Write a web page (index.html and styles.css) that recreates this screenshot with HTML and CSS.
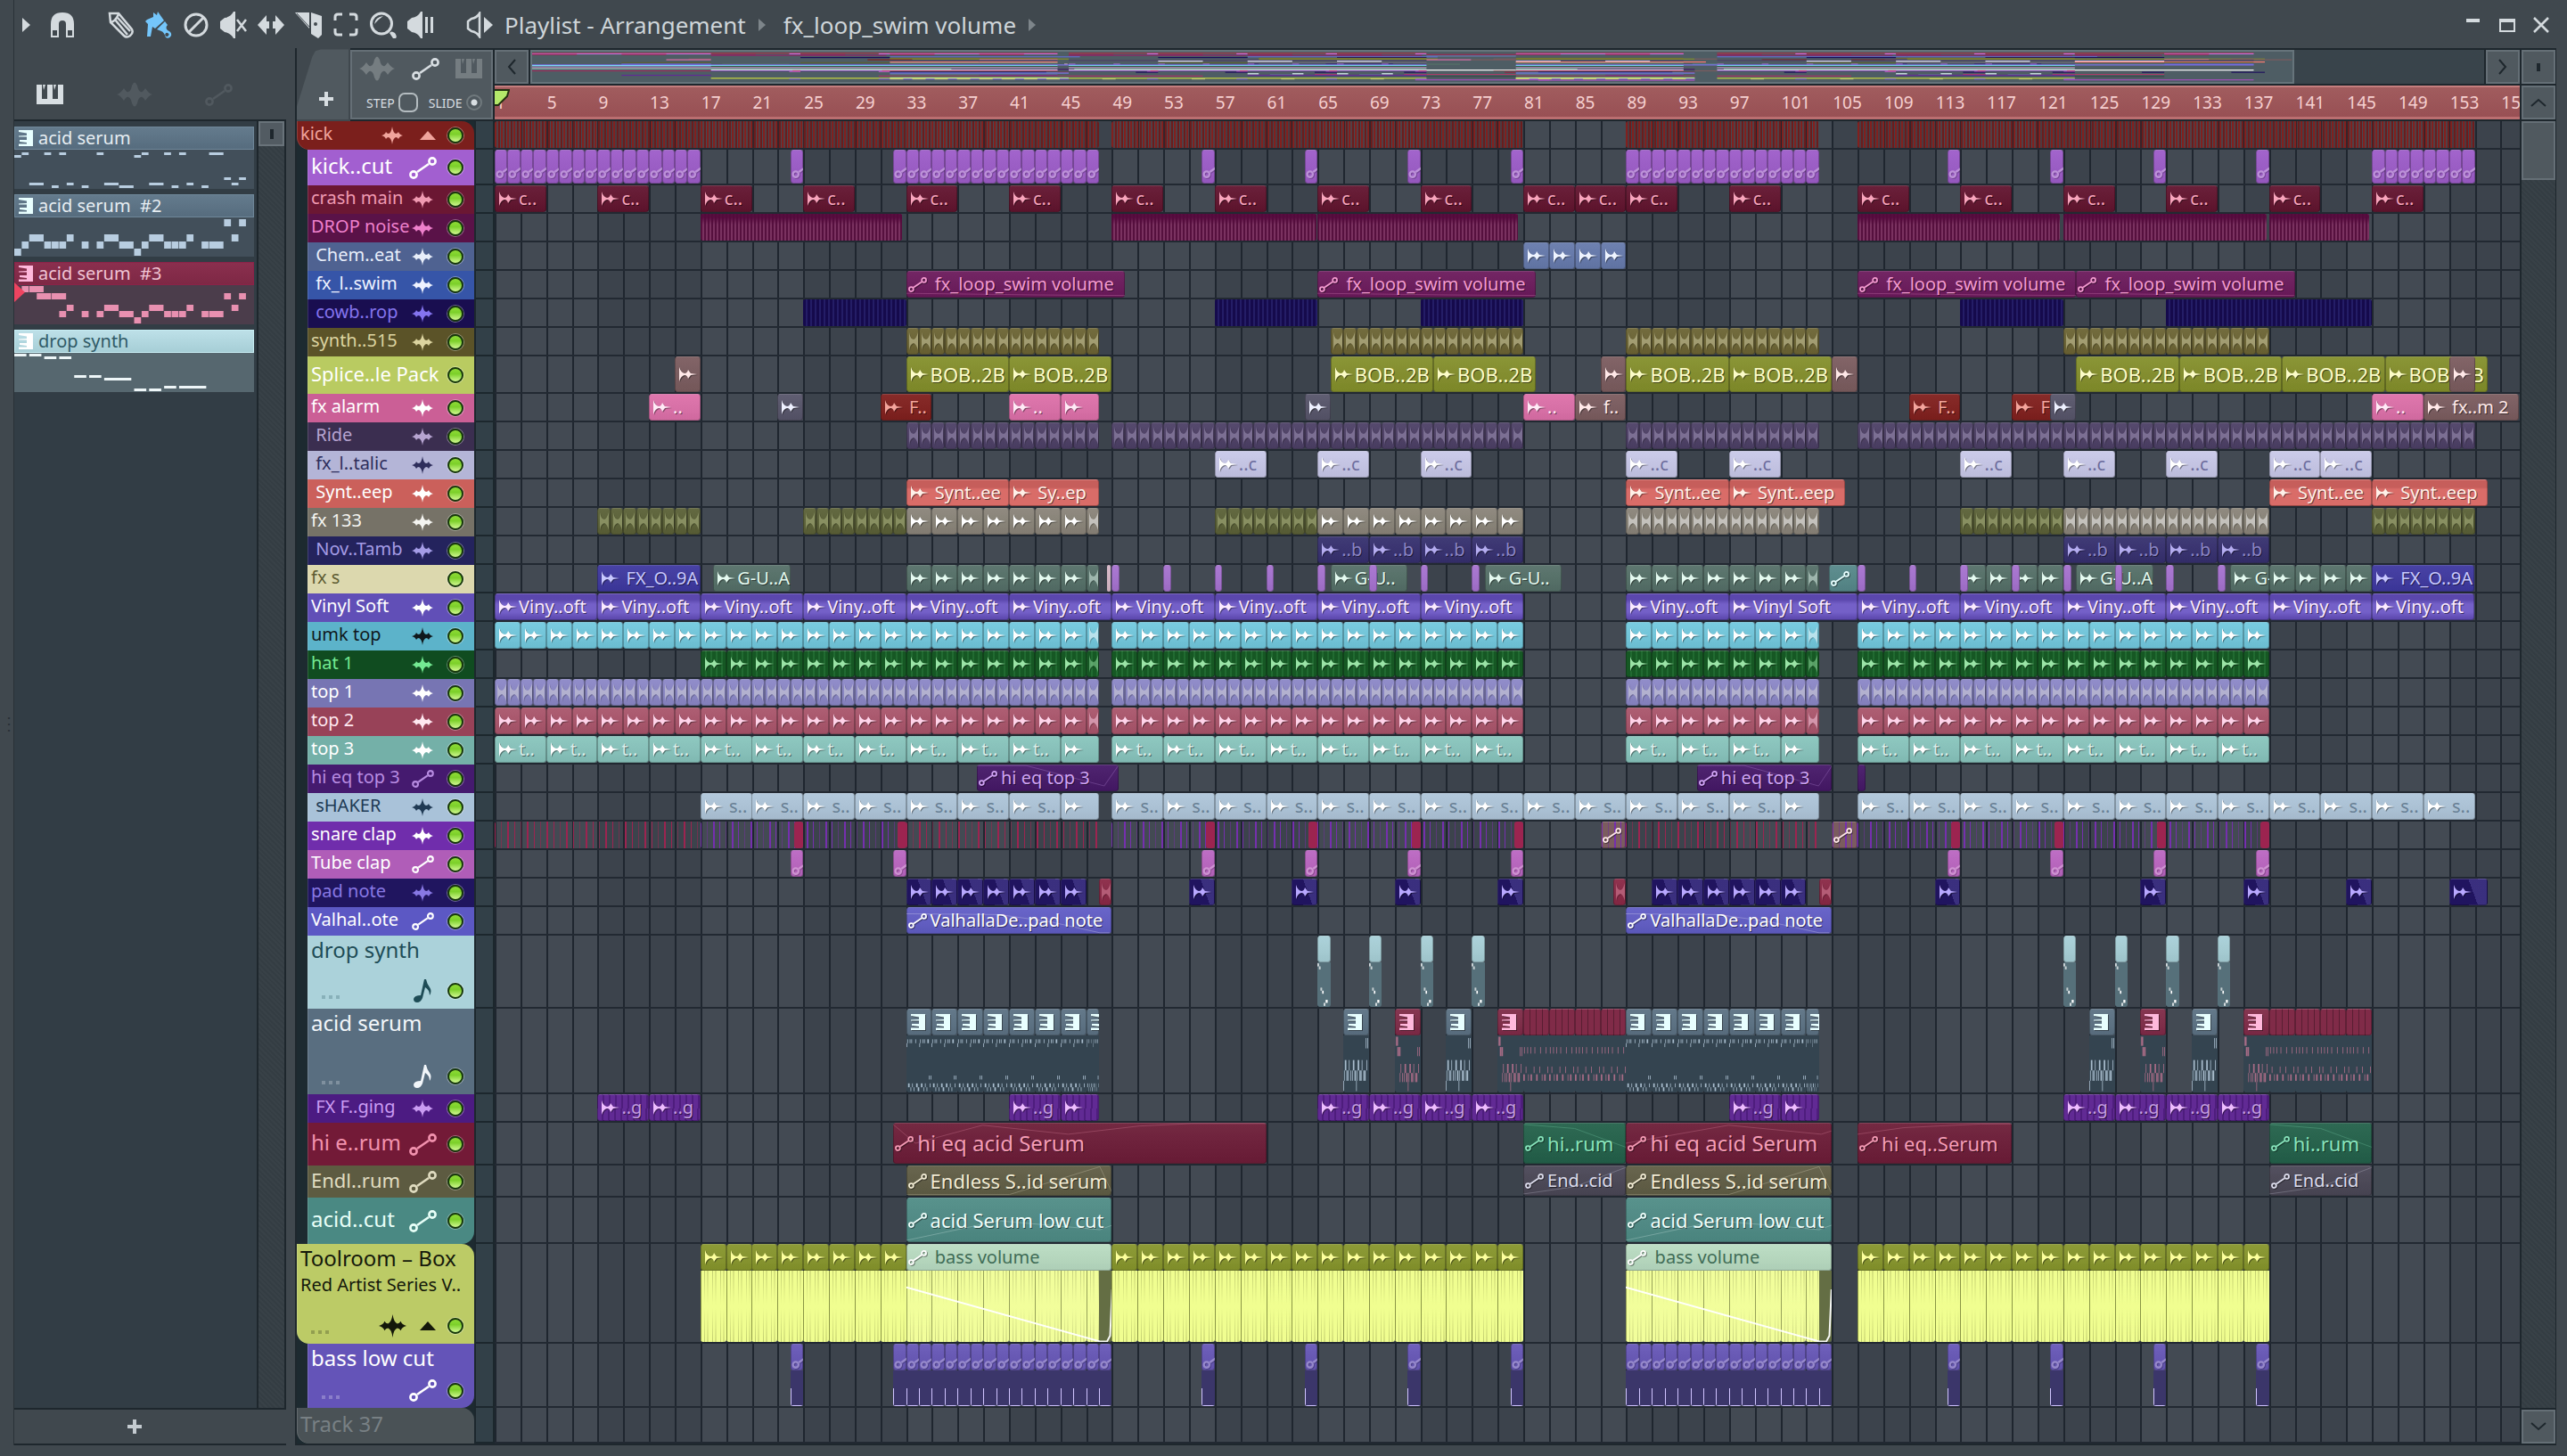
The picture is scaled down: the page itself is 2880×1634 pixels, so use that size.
FILE: index.html
```html
<!DOCTYPE html>
<html lang="en">
<head>
  <meta charset="UTF-8">
  <meta name="viewport" content="width=device-width, initial-scale=1.0">
  <title>Playlist - Arrangement</title>
  <link rel="stylesheet" href="styles.css">
</head>
<body>
  <!-- Shared icons -->
  <svg class="sprite" aria-hidden="true">
    <symbol id="i-link" viewBox="0 0 31 25">
      <g fill="none" stroke="currentColor" stroke-width="2.6">
        <circle cx="5" cy="20" r="3.6"/><circle cx="26" cy="5" r="3.6"/><path d="M9 17L22 8"/>
      </g>
    </symbol>
    <symbol id="i-wave" viewBox="0 0 40 28">
      <path fill="currentColor" d="M0 14Q4 13 8 7Q11 12 13 11Q16 10 17 4Q20 -3 23 4Q24 10 27 11Q29 12 32 7Q36 13 40 14Q36 15 32 21Q29 16 27 17Q24 18 23 24Q20 31 17 24Q16 18 13 17Q11 16 8 21Q4 15 0 14Z"/>
    </symbol>
    <symbol id="i-star" viewBox="0 0 24 20">
      <path fill="currentColor" d="M0 10Q4 9 5 6Q6 8 8 8Q11 7 12 0Q13 7 16 8Q18 8 19 6Q20 9 24 10Q20 11 19 14Q18 12 16 12Q13 13 12 20Q11 13 8 12Q6 12 5 14Q4 11 0 10Z"/>
    </symbol>
    <symbol id="i-hit" viewBox="0 0 20 16">
      <path fill="currentColor" d="M0 0Q2 6 6 7Q9 7 10 3L13 7L20 8L13 9L10 13Q9 9 6 9Q2 10 0 16Z"/>
    </symbol>
    <symbol id="i-hit-short" viewBox="0 0 10 22">
      <path fill="currentColor" d="M0 1Q1 8 5 9Q8 8 10 1V21Q8 14 5 13Q1 14 0 21Z"/>
    </symbol>
    <symbol id="i-piano" viewBox="0 0 30 22">
      <path fill="currentColor" d="M0 0H6V16H12V0H18V16H24V0H30V22H0ZM7 0H10L8 6ZM19 0H22L20 6Z"/>
    </symbol>
    <symbol id="i-keys" viewBox="0 0 16 18">
      <path fill="currentColor" d="M0 0H16V18H0V15.500H9V14L1 13V11H9V7.500H0V6.500L9 6V3.500L0 2Z"/>
    </symbol>
    <symbol id="i-note" viewBox="0 0 20 26">
      <path fill="currentColor" d="M12 0L14 0Q15 5 18 9Q21 13 18 18Q18 12 13 9L10 21Q8 26 4 26Q0 26 0 22Q1 18 8 18Z"/>
    </symbol>
    <symbol id="i-up" viewBox="0 0 18 10"><path fill="currentColor" d="M9 0L18 10H0Z"/></symbol>
    <symbol id="i-plus" viewBox="0 0 16 16"><path fill="currentColor" d="M6 0H10V6H16V10H10V16H6V10H0V6H6Z"/></symbol>
    <symbol id="i-chevron" viewBox="0 0 10 18"><path fill="none" stroke="currentColor" stroke-width="2" d="M9 1L2 9L9 17"/></symbol>
  </svg>

  <header class="titlebar">
    <button class="tool tool-menu" aria-label="Menu"><svg viewBox="0 0 10 18"><path d="M0 0L10 9L0 18Z"/></svg></button>
    <button class="tool tool-magnet" aria-label="Snap"><svg viewBox="0 0 30 30"><path fill-rule="evenodd" d="M2 29V14Q2 1 15 1Q28 1 28 14V29H19V14Q19 10 15 10Q11 10 11 14V29ZM4 21V27H9V21ZM21 21V27H26V21Z"/></svg></button>
    <div class="tools">
      <button class="tool" aria-label="Draw"><svg viewBox="0 0 30 30"><path class="line" d="M2 2L12 2L27 20Q29 24 25 27Q21 30 18 27L3 12ZM2 12Q8 12 12 3M8 9L22 26M11 7L25 22"/></svg></button>
      <button class="tool tool-active" aria-label="Paint"><svg viewBox="0 0 30 30"><path fill-rule="evenodd" d="M2 9L9 6L9 1L13 4L14 0L21 10L11 19L8 17L6 28L2 28L3 14L0 11ZM22 11L25 15Q22 18 25 21Q30 23 29 27Q27 31 23 29Q21 23 18 22L13 20ZM25 24A2 2 0 1 0 26 27A2 2 0 0 0 25 24Z"/></svg></button>
      <button class="tool" aria-label="Delete"><svg viewBox="0 0 30 30"><path class="line thick" d="M7 23L23 7M15 3A12 12 0 1 0 15 27A12 12 0 1 0 15 3Z"/></svg></button>
      <button class="tool" aria-label="Mute"><svg viewBox="0 0 30 30"><path d="M0 11L5 7Q12 6 15 0H17V30H15Q12 24 5 23L0 19Z"/><path class="line" d="M19 9L29 22M29 9L19 22"/></svg></button>
      <button class="tool" aria-label="Slip"><svg viewBox="0 0 30 30"><path d="M0 15L10 4V11H13V19H10V26ZM30 15L20 4V11H17V19H20V26Z"/></svg></button>
      <button class="tool" aria-label="Slice"><svg viewBox="0 0 30 30"><path fill-rule="evenodd" d="M0 1H16V19ZM18 1L30 5V26L26 30L18 25ZM23 12A2 2 0 1 0 25 14A2 2 0 0 0 23 12Z"/><path class="cut" d="M2 2L16 17"/></svg></button>
      <button class="tool" aria-label="Select"><svg viewBox="0 0 30 30"><path class="line thick" d="M3 10V6Q3 3 6 3H11M19 3H24Q27 3 27 6V10M27 19V23Q27 26 24 26H19M11 26H6Q3 26 3 23V19"/></svg></button>
      <button class="tool" aria-label="Zoom"><svg viewBox="0 0 30 30"><path class="line thick" d="M13 2A11 11 0 1 0 13 25A11 11 0 1 0 13 2Z"/><path d="M5 14Q6 6 15 5Q9 9 5 14ZM22 24Q24 21 28 24Q31 28 29 30L26 30Z"/></svg></button>
      <button class="tool" aria-label="Playback"><svg viewBox="0 0 30 30"><path d="M0 11L5 7Q12 6 15 0H17V30H15Q12 24 5 23L0 19ZM20 6H23V24H20ZM26 6H29V24H26Z"/></svg></button>
    </div>
    <button class="tool" aria-label="Audition"><svg viewBox="0 0 30 30"><path class="line" d="M2 11L6 8Q12 7 15 2V28Q12 23 6 22L2 19Z"/><path d="M20 6L30 15L20 24Z"/></svg></button>
    <nav class="crumbs">
      <a href="#playlist">Playlist - Arrangement</a><i class="crumb-arrow"></i>
      <a href="#clip">fx_loop_swim volume</a><i class="crumb-arrow"></i>
    </nav>
    <div class="window-buttons">
      <button class="tool tool-win" aria-label="Minimise"><svg viewBox="0 0 18 18"><path d="M1 2H16V6H1Z"/></svg></button>
      <button class="tool tool-win" aria-label="Maximise"><svg viewBox="0 0 18 18"><path fill-rule="evenodd" d="M0 2H18V17H0ZM2 6V15H16V6Z"/></svg></button>
      <button class="tool tool-win" aria-label="Close"><svg viewBox="0 0 18 18"><path class="line" d="M1 1L17 17M17 1L1 17"/></svg></button>
    </div>
  </header>

  <div class="workspace">
    <div class="edge"><span class="grip">⋮</span></div>

    <aside class="picker">
      <div class="picker-tabs">
        <button class="tab on" aria-label="Patterns"><svg class="ic-piano"><use href="#i-piano"/></svg></button>
        <button class="tab" aria-label="Audio"><svg class="ic-wave"><use href="#i-wave"/></svg></button>
        <button class="tab" aria-label="Automation"><svg class="ic-link"><use href="#i-link"/></svg></button>
      </div>
      <div class="picker-body">
        <div class="picker-list" id="pickerList"></div>
        <div class="picker-scroll"><span class="picker-thumb"></span></div>
      </div>
      <button class="picker-add" aria-label="Add pattern"><svg class="ic-plus"><use href="#i-plus"/></svg></button>
    </aside>

    <main class="playlist" id="playlist">
      <div class="playlist-top">
        <button class="add-track" aria-label="Add track"><svg class="ic-plus"><use href="#i-plus"/></svg></button>
        <div class="modes">
          <div class="mode-icons">
            <svg class="ic-wave dim"><use href="#i-wave"/></svg>
            <svg class="ic-link"><use href="#i-link"/></svg>
            <svg class="ic-piano dim"><use href="#i-piano"/></svg>
          </div>
          <div class="mode-checks">
            <label for="step">STEP</label><input type="checkbox" id="step" class="step-box">
            <label for="slide">SLIDE</label><input type="radio" id="slide" class="slide-dot" checked>
          </div>
        </div>
        <div class="time-head">
          <div class="map-row">
            <button class="scroll-btn" aria-label="Scroll left"><svg class="ic-chev"><use href="#i-chevron"/></svg></button>
            <div class="map"><div class="map-view" id="minimap"></div></div>
            <button class="scroll-btn" aria-label="Scroll right"><svg class="ic-chev flip"><use href="#i-chevron"/></svg></button>
          </div>
          <div class="ruler" id="ruler"></div>
        </div>
      </div>
      <div class="tracks" id="tracks"></div>
    </main>

    <aside class="vscroll">
      <button class="scroll-btn" aria-label="Zoom"><i class="zoom-mark"></i></button>
      <button class="scroll-btn" aria-label="Scroll up"><svg class="ic-chev up"><use href="#i-chevron"/></svg></button>
      <div class="vtrack"><span class="vthumb"></span></div>
      <button class="scroll-btn" aria-label="Scroll down"><svg class="ic-chev down"><use href="#i-chevron"/></svg></button>
    </aside>
  </div>

  <script src="script.js"></script>
</body>
</html>
```
FILE: styles.css
```css
* {
  box-sizing: border-box;
}

body {
  margin: 0;
  height: 100vh;
  display: flex;
  flex-direction: column;
  overflow: hidden;
  background: #40484e;
  color: #d4dade;
  font-family: "Noto Sans", "Open Sans", sans-serif;
  font-size: 20px;
}

button {
  padding: 0;
  border: none;
  background: none;
  color: inherit;
  font: inherit;
  cursor: pointer;
}

svg {
  display: block;
}

.sprite {
  position: absolute;
  width: 0;
  height: 0;
}

.ic-piano { width: 30px; height: 22px; }
.ic-wave { width: 40px; height: 28px; }
.ic-link { width: 31px; height: 25px; }
.ic-plus { width: 16px; height: 16px; }
.ic-chev { width: 10px; height: 18px; }
.ic-chev.flip { transform: rotate(180deg); }
.ic-chev.up { transform: rotate(90deg); }
.ic-chev.down { transform: rotate(-90deg); }
.dim { color: #757d81; }

/* ---- Title bar ---- */

.titlebar {
  display: flex;
  align-items: center;
  height: 54px;
  padding: 2px 20px 0 25px;
}

.tool {
  width: 30px;
  height: 30px;
  color: #d4dade;
}

.tool svg {
  width: 100%;
  height: 100%;
  fill: currentColor;
}

.tool .line {
  fill: none;
  stroke: currentColor;
  stroke-width: 2.5;
}

.tool .thick {
  stroke-width: 3;
}

.tool .cut {
  stroke: #40484e;
  stroke-width: 1;
}

.tool-menu {
  width: 9px;
  height: 18px;
  margin-right: 21px;
}

.tool-magnet {
  margin-right: 36px;
}

.tool-active {
  color: #74c6fb;
}

.tools {
  display: flex;
  gap: 12px;
  margin-right: 36px;
}

.crumbs {
  display: flex;
  align-items: center;
  margin-left: 13px;
  font-size: 26px;
  line-height: 32px;
}

.crumbs a {
  color: #ced5d9;
  text-decoration: none;
}

.crumb-arrow {
  margin: 0 20px 0 14px;
  border-left: 8px solid #7d858a;
  border-top: 7px solid transparent;
  border-bottom: 7px solid transparent;
}

.window-buttons {
  display: flex;
  gap: 20px;
  margin-left: auto;
}

.tool-win {
  width: 18px;
  height: 18px;
}

/* ---- Workspace ---- */

.workspace {
  flex: 1;
  min-height: 0;
  display: flex;
  padding-right: 12px;
  margin-bottom: 12px;
}

.edge {
  flex: none;
  width: 16px;
  display: flex;
  align-items: center;
  border-right: 1px solid #2a3238;
  margin-top: -54px;
}

.grip {
  color: #2a3238;
}

/* ---- Picker ---- */

.picker {
  flex: none;
  width: 305px;
  display: flex;
  flex-direction: column;
}

.picker-tabs {
  height: 80px;
  display: flex;
  align-items: center;
  justify-content: space-between;
  padding: 24px 60px 0 25px;
}

.tab {
  color: #51595f;
}

.tab.on {
  color: #d8dee2;
}

.picker-body {
  flex: 1;
  min-height: 0;
  display: flex;
  border: 2px solid #1e272d;
  border-left: none;
}

.picker-list {
  flex: 1;
  display: flex;
  flex-direction: column;
  gap: 6px;
  padding: 6px 3px 0 0;
  background: #323d45;
}

.picker-scroll {
  width: 31px;
  border-left: 2px solid #1e272d;
  background: repeating-linear-gradient(45deg, #343d43 0 2px, #384147 2px 4px);
}

.picker-thumb {
  display: flex;
  align-items: center;
  justify-content: center;
  height: 28px;
  border: 2px solid #69737a;
  background: #525b62;
}

.picker-thumb::after {
  content: "";
  width: 4px;
  height: 11px;
  background: #1e272d;
}

.picker-add {
  height: 40px;
  display: flex;
  align-items: center;
  justify-content: center;
  padding-right: 35px;
  color: #c4cbd0;
  border-bottom: 2px solid #1e272d;
}

.pattern {
  position: relative;
  height: 70px;
  background: #424f5a;
  color: #b8cde0;
}

.pattern-name {
  display: flex;
  align-items: center;
  gap: 6px;
  height: 26px;
  padding: 0 4px;
  background: linear-gradient(#647b8d, #566c7e);
  border: 1px solid #6f8799;
  color: #e6edf2;
  line-height: 26px;
  white-space: pre;
}

.pattern-name svg {
  width: 16px;
  height: 18px;
  color: #e8ffff;
}

.pattern .notes {
  height: 44px;
}

.pattern.red { background: #4b3d4b; color: #e890b0; }
.pattern.red .pattern-name { background: linear-gradient(#8a2f4e, #7e2845); border-color: #8c2248; color: #f0c4d4; }
.pattern.red .pattern-name svg { color: #ffb8dc; }
.pattern.ice { background: #56676f; color: #eef6f8; }
.pattern.ice .pattern-name { background: linear-gradient(#bde0e8, #a6ced6); border-color: #c8eef4; color: #305a66; }
.pattern.ice .pattern-name svg { color: #ffffff; }

.selected-mark {
  position: absolute;
  left: 0;
  top: 23px;
  border-left: 12px solid #ee4460;
  border-top: 11px solid transparent;
  border-bottom: 11px solid transparent;
}

.notes {
  width: 100%;
  fill: currentColor;
}

/* ---- Playlist head ---- */

.playlist {
  flex: 1;
  min-width: 0;
  display: flex;
  flex-direction: column;
  margin-left: 10px;
  border-left: 2px solid #1e272d;
  border-bottom: 2px solid #1e272d;
}

.playlist-top {
  flex: none;
  height: 82px;
  display: flex;
  gap: 2px;
  padding-bottom: 2px;
  background: linear-gradient(to right, #40484e 60px, #1e272d 60px);
}

.add-track {
  width: 58px;
  display: flex;
  align-items: flex-end;
  justify-content: center;
  padding: 0 0 15px 8px;
  color: #d8dee2;
  background: #50595f;
  clip-path: polygon(0 100%, 0 82%, 30% 12%, 36% 4%, 46% 2%, 100% 2%, 100% 100%);
}

.modes {
  width: 160px;
  margin-top: 2px;
  padding: 3px 10px 0 8px;
  background: #50595f;
  border: 2px solid #656f76;
  color: #d8dee2;
}

.mode-icons,
.mode-checks {
  display: flex;
  align-items: center;
  justify-content: space-between;
  height: 32px;
}

.mode-checks {
  justify-content: flex-start;
  margin: 6px 0 0 8px;
  font-size: 14px;
}

.step-box,
.slide-dot {
  appearance: none;
  flex: none;
  margin: 0 12px 0 4px;
  width: 22px;
  height: 22px;
  border: 2px solid #b4bcc0;
  border-radius: 7px;
}

.slide-dot {
  margin-right: 0;
  width: 18px;
  height: 18px;
  border: 2px solid #70797d;
  border-radius: 50%;
  background: radial-gradient(#d8dee2 0 3px, transparent 4px);
}

.time-head {
  flex: 1;
  min-width: 0;
}

.map-row {
  display: flex;
  gap: 2px;
  height: 42px;
  padding: 2px 0;
}

.scroll-btn {
  flex: none;
  display: flex;
  align-items: center;
  justify-content: center;
  width: 38px;
  height: 38px;
  background: #50595f;
  border: 2px solid #656f76;
  color: #1e272d;
}

.map {
  flex: 1;
  background: #39444b;
}

.map-view {
  width: 90.3%;
  height: 100%;
  background: #4e5d64;
  border: 2px solid #66747b;
}

.map-view svg {
  width: 100%;
  height: 100%;
}

.map-view rect {
  fill: var(--map, var(--clip));
}

.ruler {
  position: relative;
  height: 38px;
  overflow: hidden;
  background: linear-gradient(#a15c5e, #985054);
  border-top: 2px solid #c47e7e;
  border-bottom: 3px solid #ba6e70;
  color: #f6d0d0;
  font-size: 19px;
  line-height: 32px;
}

.bar-no {
  position: absolute;
  top: 1px;
  padding-left: 1px;
}

.playhead {
  position: absolute;
  left: 0;
  top: 2px;
  width: 17px;
  height: 20px;
  fill: #b4e86a;
  stroke: #223010;
  stroke-width: 2;
}

/* ---- Tracks ---- */

.tracks {
  flex: 1;
  min-height: 0;
  display: flex;
  flex-direction: column;
  background: #1d2a30;
}

.track {
  flex: none;
  display: grid;
  grid-template-columns: 199px 23px minmax(0, 1fr);
}

.track:last-child {
  flex: 1;
}

.track-head {
  position: relative;
  display: flex;
  align-items: center;
  margin-left: 12px;
  padding: 0 12px 4px 4px;
  background: var(--head);
  color: var(--ink);
  box-shadow: inset 1px 0 0 rgba(255, 255, 255, .15);
}

.group .track-head {
  margin-left: 0;
  border-radius: 0 14px 0 14px;
}

.group-end .track-head {
  border-radius: 0 0 14px 0;
}

.track-name {
  flex: 1;
  min-width: 0;
  white-space: pre;
  line-height: 26px;
}

.track-name.mid { font-size: 22px; line-height: 32px; }
.track-name.big { font-size: 24px; line-height: 32px; }
.track-name small { display: block; font-size: 20px; line-height: 28px; }

.slot {
  flex: none;
  display: flex;
  align-items: center;
  justify-content: center;
  width: 32px;
  margin-right: 12px;
  padding-top: 4px;
}

.slot + .slot {
  margin-left: -4px;
  margin-right: 6px;
}

.slot .s-star { width: 24px; height: 20px; }
.slot .s-link { width: 25px; height: 20px; }
.slot .s-up { width: 18px; height: 10px; }
.slot .s-note { width: 20px; height: 26px; }
.tallish .slot .s-link { width: 31px; height: 25px; }
.tall .slot .s-star { width: 31px; height: 26px; }

.led {
  flex: none;
  width: 18px;
  height: 18px;
  margin-top: 4px;
  border: 2px solid #17380c;
  border-radius: 50%;
  background: linear-gradient(#8edb36, #7cd02a 40%, #d0f890);
  box-shadow: 0 0 0 1px rgba(255, 255, 255, .35);
}

.tall .track-head {
  flex-wrap: wrap;
  align-content: space-between;
  justify-content: flex-end;
  padding-bottom: 7px;
}

.tall .track-name {
  flex: 1 0 100%;
}

.dots {
  margin: 18px auto 0 12px;
  width: 20px;
  height: 4px;
  opacity: .25;
  background: repeating-linear-gradient(to right, currentColor 0 4px, transparent 4px 8px);
}

.gutter {
  border: 2px solid #1c272d;
  border-width: 0 2px 2px 2px;
  background: #324048;
}

.lane {
  position: relative;
  overflow: hidden;
  background:
    linear-gradient(to top, #222932 0 2px, transparent 2px),
    repeating-linear-gradient(to right, #1f262f 0 2px, transparent 2px calc(100% * 2 / 157.5)),
    repeating-linear-gradient(to right, #434a53 0 calc(100% * 8 / 157.5), #3c434c 0 calc(100% * 16 / 157.5));
}

/* ---- Clips ---- */

.clip {
  position: absolute;
  top: 0;
  bottom: 2px;
  display: flex;
  flex-direction: column;
  overflow: hidden;
  border-radius: 3px;
  color: var(--mark);
}

.clip-bar {
  flex: 1;
  min-height: 0;
  display: flex;
  align-items: center;
  padding-left: 4px;
  background: var(--fill, linear-gradient(rgba(255, 255, 255, .05), rgba(0, 0, 0, .06))) var(--clip);
  border: 1px solid rgba(0, 0, 0, .25);
  border-top-color: rgba(255, 255, 255, .18);
  border-radius: 3px;
}

.clip-bar svg {
  flex: none;
  width: 20px;
  height: 16px;
  filter: drop-shadow(1px 1px 0 rgba(0, 0, 0, .4));
}

.clip.auto .clip-bar {
  padding-left: 1px;
}

.clip.auto .clip-bar svg {
  width: 21px;
  height: 17px;
  margin-right: 2px;
}

.clip.faint .clip-bar {
  padding-left: 2px;
}

.clip.faint .clip-bar svg {
  width: 10px;
  height: 22px;
  opacity: .5;
}

.clip.knob .clip-bar {
  padding-left: 0;
}

.clip.knob .clip-bar svg {
  width: 28px;
  height: 22px;
  opacity: .5;
  margin-top: 4px;
}

.clip.keys .clip-bar svg {
  width: 16px;
  height: 18px;
  color: var(--key, #e8ffff);
}

.clip.bare .clip-bar {
  border: none;
  border-radius: 0;
}

.clip-label {
  padding-left: 2px;
  white-space: pre;
  line-height: 26px;
  text-shadow: 1px 1px 0 rgba(0, 0, 0, .5);
}

.clip-label.mid { font-size: 22px; }
.clip-label.big { font-size: 24px; }

.clip.split .clip-bar {
  flex: none;
  height: 30px;
}

.clip-body {
  flex: 1;
  min-height: 0;
  background: var(--body);
  color: var(--note);
}

.clip-body svg {
  width: 100%;
  height: 100%;
}

.curve {
  position: absolute;
  inset: 0;
  width: 100%;
  height: 100%;
  fill: none;
  stroke: currentColor;
  opacity: .25;
}

.overlay-bass .curve {
  top: 31px;
  height: 80px;
  stroke: #ffffff;
  stroke-width: 2;
  opacity: .95;
}

/* ---- Track colours ---- */

.kick { --head: #7b1f1c; --ink: #f0a49c; --clip: transparent; --map: #a03848; --mark: #f0a49c;
  --fill: repeating-linear-gradient(to right, #82201e 0 2px, rgba(125, 30, 28, .25) 2px 4px, #6c1c1c 4px 6px, transparent 6px 7px); }
.kickcut { --head: #a25fd0; --ink: #ffffff; --clip: #9d5cc9; --mark: #e2c8f0; --map: #c074e0; }
.crash { --head: #6b1733; --ink: #f09ab2; --clip: #62142f; --mark: #f8a4bc; --map: #982850; }
.drop { --head: #5a1248; --ink: #ee80cc; --clip: #54093c; --mark: #ee80cc; --map: #8c2468;
  --fill: linear-gradient(rgba(84, 9, 60, .9) 4px, transparent 12px), repeating-linear-gradient(to right, #56103e 0 2px, #7a3260 2px 4px); }
.chem { --head: #4f6291; --ink: #e8eefa; --clip: #667aac; --mark: #eef4ff; }
.swim { --head: #3655a8; --ink: #eef2ff; --clip: #6c1a5c; --mark: #f49ad0; --map: #6070c8; }
.cowb { --head: #190e50; --ink: #8474ee; --clip: #190e58; --mark: #8474ee;
  --fill: repeating-linear-gradient(to right, #150a4c 0 3px, #241d66 3px 5px); }
.synth { --head: #5b5328; --ink: #dcd4a0; --clip: #6c6434; --mark: #d8d4ac; }
.splice { --head: #b9cb61; --ink: #ffffff; --clip: #848f2b; --mark: #fcfcc8; }
.brown { --clip: #7b5c5f; --mark: #ffe8e8; }
.alarm { --head: #cb5f96; --ink: #ffffff; --clip: #dd70a9; --mark: #ffeaf6; }
.slate { --clip: #57556a; --mark: #eef0ff; }
.red-fx { --clip: #81201e; --mark: #f4a49c; }
.ride { --head: #3b2e50; --ink: #b6a4d0; --clip: #4d4066; --mark: #a89cc0; }
.talic { --head: #b4b5d7; --ink: #2e2e5c; --clip: #c8c8e9; --mark: #ffffff; --text: #6c6c9c; --map: #e8e8ff; }
.sweep { --head: #cb605b; --ink: #ffffff; --clip: #d96c68; --mark: #fff0e8; --map: #ff7c70;
  --fill: linear-gradient(rgba(120, 40, 40, .2) 8px, transparent 10px); }
.fx133 { --head: #767267; --ink: #f4f4f0; --clip: #8a8479; --mark: #ffffff; }
.olive { --clip: #5b6137; --mark: #b4bc88; }
.nov { --head: #24235d; --ink: #a49ce6; --clip: #36306f; --mark: #b4acf0; --text: #8a84c4; }
.fxs { --head: #dcd8ae; --ink: #5e5c32; --clip: #557068; --mark: #e4faf0; }
.indigo { --clip: #3e38a0; --mark: #c8c8ff; --map: #6868e8; }
.violet { --clip: #a672d0; --mark: #e0c0ff; }
.blush { --clip: #d8b8c8; }
.teal { --clip: #56888a; --mark: #e8ffff; }
.vinyl { --head: #614fb7; --ink: #ffffff; --clip: #7460c8; --mark: #fbeaff; --map: #7c70e8;
  --fill: linear-gradient(rgba(60, 40, 140, .45) 6px, transparent 11px 20px, rgba(60, 40, 140, .4) 27px); }
.umk { --head: #5cb3ca; --ink: #10181c; --clip: #72c9de; --mark: #ffffff; --map: #80e4ff; }
.hat { --head: #104c20; --ink: #74ea92; --clip: #165824; --mark: #9ae4a6;
  --fill: repeating-linear-gradient(to right, transparent 0 4px, rgba(60, 150, 80, .3) 4px 6px); }
.top1 { --head: #7775b3; --ink: #ffffff; --clip: #8b87c7; --mark: #dcdcdc; }
.top2 { --head: #984258; --ink: #ffe8f0; --clip: #aa556b; --mark: #ffd4ea; }
.top3 { --head: #74b0a8; --ink: #ffffff; --clip: #88c5bd; --mark: #ffffff; --text: #d8ece8; }
.hieq { --head: #451a6f; --ink: #b88ce2; --clip: #461868; --mark: #d0a4f4; }
.shaker { --head: #a9c2d9; --ink: #203a54; --clip: #afc6da; --mark: #ffffff; --text: #687f94; --map: #ffffff; }
.snare { --head: #702dac; --ink: #ffffff; --clip: transparent; --map: #7044a0;
  --fill: repeating-linear-gradient(to right, #752fae 0 1px, transparent 1px 7px, rgba(110, 50, 150, .6) 7px 8px, transparent 8px 14px, #752fae 14px 16px, transparent 16px 21px); }
.snare-red { --clip: transparent; --map: #98305c;
  --fill: repeating-linear-gradient(to right, #9c2450 0 1px, transparent 1px 7px, rgba(150, 40, 80, .6) 7px 8px, transparent 8px 14px, #9c2450 14px 16px, transparent 16px 22px); }
.snare-block { --clip: #9c2450; --fill: none; }
.tube { --head: #b05db8; --ink: #ffffff; --clip: #bb66c2; --mark: #eac0ea; }
.pad { --head: #20155f; --ink: #8878e4; --clip: #20145f; --mark: #b8a8ff;
  --fill: linear-gradient(70deg, transparent 60%, rgba(120, 110, 200, .3) 60%); }
.rose { --clip: #8a2846; --mark: #e08ca4; }
.valhalla { --head: #5c58c4; --ink: #ffffff; --clip: #615dc6; --mark: #ffffff; --map: #7480f0; }
.dropsynth { --head: #abd2da; --ink: #1e4c56; --clip: #a8d0d8; --mark: #ffffff; --body: #56707a; --note: #ffffff; --map: #e8ffff; }
.acid { --head: #596e80; --ink: #f2f6fa; --clip: #5c7284; --mark: #ffffff; --body: #344450; --note: #a8bccc; }
.acid-red { --clip: #802b48; --key: #ffb8dc; --body: #344450; --note: #a86c86; --map: #b03c68; }
.fxg { --head: #4c1b82; --ink: #ca9cf2; --clip: #612a94; --mark: #eebcff; --text: #c49ce0;
  --fill: repeating-linear-gradient(92deg, transparent 0 5px, rgba(50, 10, 90, .4) 5px 7px); }
.hie { --head: #731a37; --ink: #f292ae; --clip: #6d1d38; --mark: #f69cb6; --map: #a83860; }
.forest { --clip: #23614a; --mark: #88e4bc; }
.endless { --head: #5d5b41; --ink: #e0dcc0; --clip: #605d45; --mark: #f2ecd4; }
.mauve { --clip: #4a4756; --mark: #dcdcec; }
.acidcut { --head: #4a8983; --ink: #e8fff8; --clip: #4f8c86; --mark: #f0fffc; }
.tool-box { --head: #bccb66; --ink: #14180a; --clip: #87962c; --mark: #fcff9c; --map: #c8d840;
  --body: linear-gradient(to right, rgba(70, 80, 20, .6) 0 1px, transparent 1px), linear-gradient(transparent, #f0fe90 48% 52%, transparent), repeating-linear-gradient(to right, #f0fe90 0 4px, #c0cc70 4px 5px, #f0fe90 5px 7px, #d4e07c 7px 9px); }
.overlay-bass { --clip: #b9dcc2; --mark: #ffffff; --text: #3f6c56;
  --body: linear-gradient(to right, rgba(255, 255, 255, .1) 93.8%, #646e44 93.8%); --map: #f0ff90; }
.basscut { --head: #6454b8; --ink: #ffffff; --clip: #6757b7; --mark: #c8bce8; --map: #7c68c8;
  --body: linear-gradient(#d0c4ff, #d0c4ff) 0 100% / 100% 1px no-repeat, linear-gradient(#d0c4ff, #d0c4ff) 0 100% / 1px 20px no-repeat, #3b366a; }
.empty { --head: #4a5256; --ink: #788084; }
.map-olive { --clip: #b8c070; }
.map-purple { --clip: #a050b8; }

.talic .clip-label, .nov .clip-label, .top3 .clip-label, .shaker .clip-label, .fxg .clip-label, .overlay-bass .clip-label {
  color: var(--text);
}

.talic .clip-label, .shaker .clip-label, .overlay-bass .clip-label {
  text-shadow: none;
}

/* Clips recoloured inside a track drop that track's waveform */
.rose {
  --fill: linear-gradient(rgba(255, 255, 255, .05), rgba(0, 0, 0, .06));
}

.acid-red.cont {
  --fill: repeating-linear-gradient(to right, transparent 0 6px, rgba(0, 0, 0, .3) 6px 7px);
}

/* ---- Vertical scroll ---- */

.vscroll {
  flex: none;
  width: 41px;
  display: flex;
  flex-direction: column;
  gap: 2px;
  padding: 2px 1px 2px 2px;
  background: #1e272d;
}

.vtrack {
  flex: 1;
  background: repeating-linear-gradient(45deg, #343d43 0 2px, #384147 2px 4px);
}

.vthumb {
  display: block;
  height: 66px;
  background: #50595f;
  border: 2px solid #656f76;
}

.zoom-mark {
  width: 4px;
  height: 9px;
  background: #1e272d;
}
```
FILE: script.js
```js
// Visible length of the timeline, in bars
const BARS = 157.5;

// Patterns: notes are [step, length, top], 32 steps wide and 44 high
const patterns = {
  one: { h: 3, notes: [[0,1,6],[1,1,3],[4,1,3],[6,1,3],[11,1,3],[16,1,6],[17,1,3],[20,1,3],[22,1,3],[26,2,3],[2,2,37],[5,1,40],[7,1,37],[9,1,40],[12,2,37],[14,2,40],[18,2,37],[21,1,40],[23,1,37],[25,1,40],[28,1,31],[29,1,37],[30,1,31]] },
  two: { h: 8, notes: [[0,1,35],[1,1,27],[2,2,19],[4,1,27],[5,1,27],[6,1,27],[7,1,19],[9,1,27],[11,1,27],[12,2,19],[14,2,27],[16,1,35],[17,1,27],[18,2,19],[20,1,27],[21,1,27],[22,1,27],[23,1,19],[25,1,27],[26,2,27],[28,1,2],[29,1,19],[30,1,2]] },
  three: { h: 7, notes: [[1,1,1],[2,2,1],[3,2,9],[5,2,9],[6,1,29],[7,1,22],[9,1,29],[11,1,29],[12,2,22],[14,2,29],[16,1,36],[17,1,29],[18,2,22],[20,1,29],[21,1,29],[22,1,29],[23,1,22],[25,1,29],[26,2,29],[28,1,9],[29,1,22],[30,1,9]] },
  loop: { h: 5, notes: [[1,1,9],[5,1,9],[9,1,9],[14,1,9],[21,1,9],[28,1,9],[0,2,30],[3,1,24],[6,1,30],[9,2,30],[13,1,24],[16,2,30],[20,1,24],[23,1,30],[26,2,30],[30,1,24]] },
  drop: { h: 3, notes: [[0,1.7,1],[2,1.7,1],[4,1.7,4],[6,1.7,4],[8,1.7,25],[10,1.7,25],[12,3.7,28],[16,1.7,40],[18,1.7,40],[20,1.7,37],[22,3.7,37]] }
};

const pickerItems = [
  { name: "acid serum", pattern: "one" },
  { name: "acid serum  #2", pattern: "two" },
  { name: "acid serum  #3", pattern: "three", cls: "red", selected: true },
  { name: "drop synth", pattern: "drop", cls: "ice" }
];

// A run is [kind, start, end, clip length, label, options]
const wave = (s, e, len, label, o) => ["wave", s, e, len, label, o];
const auto = (s, e, label, o) => ["auto", s, e, e - s, label, o];
const bare = (s, e, o) => ["bare", s, e, e - s, "", o];
const each = (starts, fn) => starts.map(fn);

const main = [[0, 47], [48, 80], [88, 103], [106, 138]];
const fills = [23, 31, 55, 63, 71, 79, 113, 121, 129, 137];

const tracks = [
  { name: "kick", cls: "kick", h: 32, icon: "star", group: true,
    runs: [bare(0, 47), bare(48, 80), bare(88, 103), bare(106, 154)] },
  { name: "kick..cut", cls: "kickcut", h: 40, icon: "link", size: "big",
    runs: [[0, 16], [23, 24], [31, 47], [55, 56], [63, 64], [71, 72], [79, 80], [88, 103], [113, 114], [121, 122], [129, 130], [137, 138], [146, 154]].map(([s, e]) => ["knob", s, e, 1]) },
  { name: "crash main", cls: "crash", h: 32, icon: "star",
    runs: each([0, 8, 16, 24, 32, 40, 48, 56, 64, 72, 80, 84, 88, 96, 106, 114, 122, 130, 138, 146], s => wave(s, s + 4, 4, "c..")) },
  { name: "DROP noise", cls: "drop", h: 32, icon: "star",
    runs: [bare(16, 31.7), bare(48, 63.9), bare(64, 79.6), bare(106, 121.7), bare(122, 137.8), bare(138, 145.8)] },
  { name: " Chem..eat", cls: "chem", h: 32, icon: "star", runs: [wave(80, 88, 2)] },
  { name: " fx_l..swim", cls: "swim", h: 32, icon: "star",
    runs: each([32, 64, 106, 123], s => auto(s, s + 17, " fx_loop_swim volume", { curve: "0,84 60,90 100,92" })) },
  { name: " cowb..rop", cls: "cowb", h: 32, icon: "star",
    runs: [bare(24, 32), bare(56, 64), bare(72, 80), bare(114, 122), bare(130, 146)] },
  { name: "synth..515", cls: "synth", h: 32, icon: "star",
    runs: [wave(32, 47, 1), wave(65, 80, 1), wave(88, 103, 1), wave(122, 138, 1)] },
  { name: "Splice..le Pack", cls: "splice", h: 42, size: "mid", noIcon: true,
    runs: [...each([32, 40, 65, 73, 88, 96, 123, 131, 139, 147], s => wave(s, s + 8, 8, "BOB..2B", { size: "mid" })),
      ...each([14, 86, 104, 152], s => wave(s, s + 2, 2, "", { cls: "brown" }))] },
  { name: "fx alarm", cls: "alarm", h: 32, icon: "star",
    runs: [wave(12, 16, 4, ".."), wave(40, 47, 4, ".."), wave(80, 84, 4, ".."), wave(146, 150, 4, ".."),
      wave(30, 34, 4, " F..", { cls: "red-fx" }), wave(110, 114, 4, " F..", { cls: "red-fx" }), wave(118, 122, 4, " F", { cls: "red-fx" }),
      wave(22, 24, 2, "", { cls: "slate" }), wave(63, 65, 2, "", { cls: "slate" }), wave(121, 123, 2, "", { cls: "slate" }),
      wave(84, 88, 4, " f..", { cls: "brown" }), wave(150, 157.4, 7.4, " fx..m 2", { cls: "brown" })] },
  { name: " Ride", cls: "ride", h: 32, icon: "star",
    runs: [wave(32, 47, 1), wave(48, 80, 1), wave(88, 103, 1), wave(106, 154, 1)] },
  { name: " fx_l..talic", cls: "talic", h: 32, icon: "star",
    runs: each([56, 64, 72, 88, 96, 114, 122, 130, 138, 142], s => wave(s, s + 4, 4, "..c")) },
  { name: " Synt..eep", cls: "sweep", h: 32, icon: "star",
    runs: [wave(32, 40, 8, " Synt..ee"), wave(40, 47, 7, " Sy..ep"), wave(88, 96, 8, " Synt..ee"), wave(96, 105, 9, " Synt..eep"), wave(138, 146, 8, " Synt..ee"), wave(146, 155, 9, " Synt..eep")] },
  { name: "fx 133", cls: "fx133", h: 32, icon: "star",
    runs: [wave(32, 47, 2), wave(64, 80, 2), wave(88, 103, 1), wave(122, 138, 1),
      ...each([8, 24, 56, 114, 146], s => wave(s, s + 8, 1, "", { cls: "olive" }))] },
  { name: " Nov..Tamb", cls: "nov", h: 32, icon: "star", runs: [wave(64, 80, 4, "..b"), wave(122, 138, 4, "..b")] },
  { name: "fx s", cls: "fxs", h: 32, noIcon: true,
    runs: [wave(8, 16, 8, " FX_O..9A", { cls: "indigo" }), wave(146, 154, 8, " FX_O..9A", { cls: "indigo" }),
      wave(17, 23, 6, "G-U..A"), wave(32, 47, 2), wave(65, 71, 6, "G-U.."), wave(77, 83, 6, "G-U.."), wave(88, 103, 2),
      wave(114, 122, 2), wave(123, 129, 6, "G-U..A"), wave(135, 138, 3, "G-"), wave(138, 146, 2),
      auto(103.8, 106, "", { cls: "teal" }), bare(47.6, 47.9, { cls: "blush" }),
      ...each([48, 52, 56, 60, 64, 68, 72, 76, 106, 110, 114, 118, 122, 126, 130, 134], s => ["plain", s, s + .6, .6, "", { cls: "violet" }])] },
  { name: "Vinyl Soft", cls: "vinyl", h: 32, icon: "star",
    runs: [wave(0, 80, 8, "Viny..oft"), wave(88, 96, 8, "Viny..oft"), wave(96, 106, 10, "Vinyl Soft"), wave(106, 154, 8, "Viny..oft")] },
  { name: "umk top", cls: "umk", h: 32, icon: "star", runs: each(main, ([s, e]) => wave(s, e, 2)) },
  { name: "hat 1", cls: "hat", h: 32, icon: "star", runs: each(main, ([s, e]) => wave(Math.max(s, 16), e, 2)) },
  { name: "top 1", cls: "top1", h: 32, icon: "star", runs: each(main, ([s, e]) => wave(s, e, 1)) },
  { name: "top 2", cls: "top2", h: 32, icon: "star", runs: each(main, ([s, e]) => wave(s, e, 2)) },
  { name: "top 3", cls: "top3", h: 32, icon: "star", runs: each(main, ([s, e]) => wave(s, e, 4, "t..")) },
  { name: "hi eq top 3", cls: "hieq", h: 32, icon: "link",
    runs: [auto(37.5, 48.5, "hi eq top 3", { curve: "0,4 35,4 90,80 100,4" }), auto(93.5, 104, "hi eq top 3", { curve: "0,4 35,4 90,80 100,4" }), ["plain", 106, 106.6, .6]] },
  { name: " sHAKER", cls: "shaker", h: 32, icon: "star",
    runs: [wave(16, 47, 4, " s.."), wave(48, 88, 4, " s.."), wave(88, 103, 4, " s.."), wave(106, 154, 4, " s..")] },
  { name: "snare clap", cls: "snare", h: 32, icon: "star",
    runs: [bare(0, 16, { cls: "snare-red" }), bare(16, 32), bare(32, 47, { cls: "snare-red" }), bare(48, 80), bare(88, 103, { cls: "snare-red" }), bare(106, 138),
      ...each(fills, s => bare(s + .3, s + 1, { cls: "snare-block" })),
      auto(86, 88, "", { cls: "brown knot" }), auto(104, 106, "", { cls: "brown knot" })] },
  { name: "Tube clap", cls: "tube", h: 32, icon: "link", runs: each(fills, s => ["knob", s, s + 1, 1]) },
  { name: "pad note", cls: "pad", h: 32, icon: "star",
    runs: [wave(32, 46, 2), wave(90, 102, 2), ...each([54, 62, 70, 78, 112, 128, 136, 144], s => wave(s, s + 2, 2)), wave(152, 155, 3),
      ...each([47, 87, 103], s => wave(s, s + 1, 1, "", { cls: "rose" }))] },
  { name: "Valhal..ote", cls: "valhalla", h: 32, icon: "link",
    runs: each([32, 88], s => auto(s, s + 16, "ValhallaDe..pad note", { curve: "0,25 45,28 70,55 94,96 99,96" })) },
  { name: "drop synth", cls: "dropsynth", h: 82, icon: "note", size: "big", tall: true,
    runs: each([64, 68, 72, 76, 122, 126, 130, 134], s => ["plain", s, s + 1, 1, "", { body: "drop" }]) },
  { name: "acid serum", cls: "acid", h: 96, icon: "note", size: "big", tall: true,
    runs: [["keys", 32, 47, 2, "", { body: "one" }], ["keys", 88, 103, 2, "", { body: "one" }],
      ...each([66, 74, 124, 132], s => ["keys", s, s + 2, 2, "", { body: "two" }]),
      ...each([70, 78, 128, 136], s => ["keys", s, s + 2, 2, "", { cls: "acid-red", body: "three" }]),
      ["plain", 80, 88, 2, "", { cls: "acid-red cont", body: "loop" }], ["plain", 138, 146, 2, "", { cls: "acid-red cont", body: "loop" }]] },
  { name: " FX F..ging", cls: "fxg", h: 32, icon: "star",
    runs: [wave(8, 16, 4, "..g"), wave(40, 47, 4, "..g"), wave(64, 80, 4, "..g"), wave(96, 103, 4, "..g"), wave(122, 138, 4, "..g")] },
  { name: "hi e..rum", cls: "hie", h: 48, icon: "link", size: "big",
    runs: [auto(31, 60, "hi eq acid Serum", { size: "big", curve: "0,4 6,50 24,6 47,28 66,8 80,2 100,2" }),
      auto(88, 104, "hi eq acid Serum", { size: "big", curve: "0,50 50,6 95,28 100,20" }),
      auto(106, 118, "hi eq..Serum", { size: "mid", curve: "0,28 30,12 80,3 100,3" }),
      auto(80, 88, "hi..rum", { cls: "forest", size: "mid", curve: "0,4 50,14 100,60" }), auto(138, 146, "hi..rum", { cls: "forest", size: "mid", curve: "0,4 50,14 100,60" })] },
  { name: "Endl..rum", cls: "endless", h: 36, icon: "link", size: "mid",
    runs: [...each([32, 88], s => auto(s, s + 16, "Endless S..id serum", { size: "mid", curve: "0,96 50,96 94,4 100,90" })),
      ...each([80, 138], s => auto(s, s + 8, "End..cid", { cls: "mauve", curve: "0,94 50,70 100,6" }))] },
  { name: "acid..cut", cls: "acidcut", h: 52, icon: "link", size: "big", end: true,
    runs: each([32, 88], s => auto(s, s + 16, "acid Serum low cut", { size: "mid", curve: "0,96 45,52 94,72 100,62" })) },
  { name: "Toolroom – Box<small>Red Artist Series V..</small>", cls: "tool-box", h: 112, icon: "star", size: "big", tall: true, group: true,
    runs: [...each([[16, 47], [48, 80], [88, 103], [106, 138]], ([s, e]) => wave(s, e, 2, "", { body: "none" })),
      ...each([32, 88], s => auto(s, s + 16, " bass volume", { cls: "overlay-bass", body: "none", curve: "0,22 94,98 97.500,98 99,90 100,25" }))] },
  { name: "bass low cut", cls: "basscut", h: 72, icon: "link", size: "big", tall: true, end: true,
    runs: [[23, 24], [31, 48], [55, 56], [63, 64], [71, 72], [79, 80], [88, 104], [113, 114], [121, 122], [129, 130], [137, 138]].map(([s, e]) => ["knob", s, e, 1, "", { body: "none" }]) },
  { name: "Track 37", cls: "empty", h: 40, size: "big", noIcon: true, noLed: true, group: true, runs: [] }
];

const pct = bars => (bars / BARS * 100).toFixed(3) + "%";
const icon = (id, cls) => `<svg class="${cls || ""}"><use href="#i-${id}"/></svg>`;

function noteSvg(name) {
  const p = patterns[name];
  if (!p) return "";
  const rects = p.notes.map(([x, w, y]) => `<rect x="${x}" y="${y}" width="${w - .08}" height="${p.h}"/>`).join("");
  return `<svg class="notes" viewBox="0 0 32 44" preserveAspectRatio="none">${rects}</svg>`;
}

// Split a run into its clips; the last one may be cut short
function expand([kind, start, end, len, label = "", opt = {}]) {
  const clips = [];
  for (let s = start; s < end - .01; s += len) {
    const size = Math.min(len, end - s);
    clips.push({ kind, start: s, size, label: size < len - .01 ? "" : label, opt });
  }
  return clips;
}

function clipHtml(c, track) {
  const { kind, opt } = c;
  const faint = kind === "wave" && c.size <= 1;
  const glyph = faint ? "hit-short" : { wave: "hit", auto: "link", knob: "link", keys: "keys" }[kind];
  const cls = ["clip", kind, opt.cls || track.cls];
  if (faint) cls.push("faint");
  if (opt.body) cls.push("split");
  return `<div class="${cls.join(" ")}" style="left:${pct(c.start)};width:${pct(c.size)}">
    <div class="clip-bar">${glyph ? icon(glyph) : ""}${c.label ? `<span class="clip-label ${opt.size || ""}">${c.label}</span>` : ""}</div>
    ${opt.body ? `<div class="clip-body">${noteSvg(opt.body)}</div>` : ""}
    ${opt.curve ? `<svg class="curve" viewBox="0 0 100 100" preserveAspectRatio="none"><polyline points="${opt.curve}" vector-effect="non-scaling-stroke"/></svg>` : ""}
  </div>`;
}

function trackHtml(t) {
  const cls = ["track", t.cls, t.group ? "group" : "", t.end ? "group-end" : "", t.tall ? "tall tallish" : t.h > 32 ? "tallish" : ""];
  const slots = t.noIcon ? "" : `<span class="slot">${icon(t.icon, "s-" + t.icon)}</span>` + (t.group ? `<span class="slot">${icon("up", "s-up")}</span>` : "");
  const clips = t.runs.flatMap(expand).map(c => clipHtml(c, t)).join("");
  return `<div class="${cls.join(" ")}" style="height:${t.h}px">
    <div class="track-head">
      <span class="track-name ${t.size || ""}">${t.name}</span>
      ${t.tall ? '<i class="dots"></i>' : ""}${slots}
      ${t.noLed ? "" : '<button class="led" aria-label="Mute track"></button>'}
    </div>
    <div class="gutter"></div>
    <div class="lane">${clips}</div>
  </div>`;
}

function renderPicker() {
  document.getElementById("pickerList").innerHTML = pickerItems.map(p => `
    <div class="pattern ${p.cls || ""}"><div class="pattern-name">${icon("keys")}<span>${p.name}</span></div>${noteSvg(p.pattern)}${p.selected ? '<i class="selected-mark"></i>' : ""}</div>`).join("");
}

function renderRuler() {
  let html = "";
  for (let bar = 1; bar <= BARS; bar += 4) {
    html += `<span class="bar-no" style="left:${pct(bar - 1)}">${bar}</span>`;
  }
  html += '<svg class="playhead" viewBox="0 0 17 20"><path d="M-2 1H16L14 8L4 18H-2Z"/></svg>';
  document.getElementById("ruler").innerHTML = html;
}

function renderMinimap() {
  const rect = (cls, x, y, w) => `<rect class="${cls}" x="${x}" y="${y.toFixed(2)}" width="${w}" height="1.2"/>`;
  let out = "";
  tracks.forEach((t, i) => {
    t.runs.forEach(([, s, e, , , o = {}]) => {
      out += rect(o.cls || t.cls, s, 1 + i * .83, e - s);
    });
  });
  // Lanes scrolled out of view below
  for (let s = 32; s < 48; s += 2) out += rect("map-olive", s, 30, 1.2);
  for (let s = 88; s < 104; s += 2) out += rect("map-olive", s, 30, 1.2);
  [51, 59, 67, 75, 109, 117, 125, 133].forEach(s => { out += rect("map-olive", s, 30, 1.2); });
  out += rect("map-purple", 79, 31, 12) + rect("map-purple", 90, 31.5, 14) + rect("map-purple", 137, 31, 17);
  document.getElementById("minimap").innerHTML = `<svg viewBox="0 0 ${BARS} 34" preserveAspectRatio="none">${out}</svg>`;
}

renderPicker();
renderRuler();
renderMinimap();
document.getElementById("tracks").innerHTML = tracks.map(trackHtml).join("");
```
